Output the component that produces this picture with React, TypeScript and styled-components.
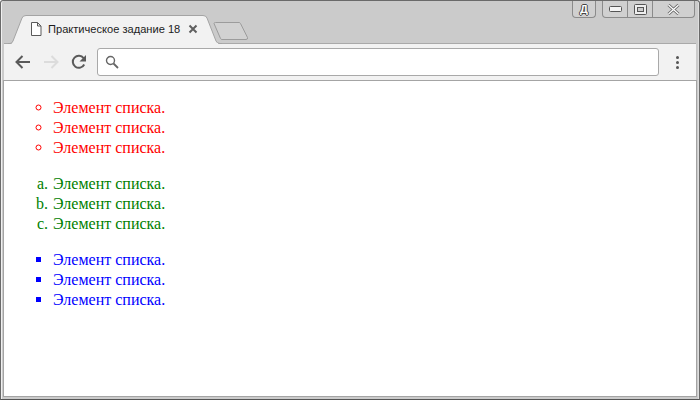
import React from "react";
import styled, { createGlobalStyle } from "styled-components";

const Global = createGlobalStyle`
  html, body { margin: 0; padding: 0; width: 700px; height: 400px; overflow: hidden; background: #fff; }
`;

const Frame = styled.div`
  box-sizing: border-box;
  width: 700px;
  height: 400px;
  display: flex;
  flex-direction: column;
  background: #cbcbcb;
  border: 1px solid #6a6a6a;
  border-bottom-color: #555;
  border-radius: 3px 3px 0 0;
  padding: 0 3px 3px 3px;
  box-shadow: inset 1px 0 0 #f0f0f0, inset -1px 0 0 #dedede;
`;

const TitleBar = styled.header`
  height: 42px;
  flex: none;
  display: flex;
  position: relative;
  align-items: flex-end;
  padding-left: 4px;
`;

const Tab = styled.div`
  position: relative;
  width: 214px;
  height: 29px;
  margin-bottom: -1px;
  display: flex;
  align-items: center;
  padding: 0 0 1px 22px;
  box-sizing: border-box;
  font: 11.1px "Liberation Sans", Arial, sans-serif;
  color: #1c1c1c;
`;

const TabShape = styled.svg`
  position: absolute;
  left: 0;
  top: 0;
`;

const TabIcon = styled.svg`
  position: relative;
  flex: none;
  margin-right: 6px;
`;

const TabTitle = styled.span`
  position: relative;
  white-space: nowrap;
  width: 140px;
`;

const TabClose = styled.svg`
  position: relative;
  flex: none;
`;

const NewTab = styled.svg`
  position: absolute;
  left: 209px;
  top: 21px;
`;

const Controls = styled.div`
  position: absolute;
  top: 0;
  right: 1px;
  display: flex;
  gap: 6px;
`;

const ControlGroup = styled.div`
  display: flex;
  height: 17px;
  box-sizing: border-box;
  border: 1px solid #8b8b8b;
  border-top: 0;
  border-radius: 0 0 4px 4px;
  background: #d0d0d0;
  overflow: hidden;
`;

const ControlButton = styled.div<{ $w: number; $divided?: boolean }>`
  width: ${(p) => p.$w}px;
  display: flex;
  align-items: center;
  justify-content: center;
  box-sizing: border-box;
  border-left: ${(p) => (p.$divided ? "1px solid #8b8b8b" : "0")};
`;

const LangLetter = styled.span`
  font: bold 11px "Liberation Sans", Arial, sans-serif;
  color: #fff;
  text-shadow: 1px 0 0 #444, -1px 0 0 #444, 0 1px 0 #444, 0 -1px 0 #444;
`;

const Toolbar = styled.nav`
  height: 38px;
  flex: none;
  box-sizing: border-box;
  background: #f2f2f2;
  border-top: 1px solid #a9a9a9;
  border-bottom: 1px solid #a9a9a9;
  display: flex;
  align-items: center;
  padding: 0 0 0 10px;
`;

const NavIcon = styled.svg<{ $gap: number }>`
  flex: none;
  margin-right: ${(p) => p.$gap}px;
`;

const Address = styled.div`
  flex: none;
  width: 562px;
  height: 28px;
  box-sizing: border-box;
  background: #fff;
  border: 1px solid #a9a9a9;
  border-radius: 3px;
  display: flex;
  align-items: center;
  padding-left: 7px;
`;

const Menu = styled.div`
  flex: 1;
  display: flex;
  flex-direction: column;
  align-items: center;
  gap: 2px;
`;

const Dot = styled.i`
  width: 3px;
  height: 3px;
  border-radius: 50%;
  background: #555;
`;

const Content = styled.main`
  flex: 1;
  background: #fff;
  padding: 16px 8px 0;
  box-sizing: border-box;
  font: 16px/20px "Liberation Serif", "Times New Roman", serif;
  box-shadow: 0 0 0 1px #a4a4a4;
`;

/* Text markers share the text's baseline; drawn markers sit 1px above it. */
const List = styled.ul<{ $color: string; $marker: string; $textMarker?: boolean }>`
  margin: 0 0 ${(p) => (p.$textMarker ? 15 : 16)}px;
  padding: ${(p) => (p.$textMarker ? 1 : 0)}px 0 0 40px;
  color: ${(p) => p.$color};
  list-style-type: ${(p) => p.$marker};
`;

const Item = styled.li`
  height: 20px;
`;

const ItemText = styled.span<{ $drop: number }>`
  margin-left: 1px;
  vertical-align: ${(p) => -p.$drop}px;
`;

const groups = [
  { color: "#ff0000", marker: "circle", textMarker: false },
  { color: "#008000", marker: "lower-alpha", textMarker: true },
  { color: "#0000ff", marker: "square", textMarker: false },
];

export default function App() {
  return (
    <>
      <Global />
      <Frame>
        <TitleBar>
          <Tab>
            <TabShape width="214" height="29" viewBox="0 0 214 29">
              <path d="M0 28.5 H2 Q4 28.5 5 26 L14 3 Q15 .5 18 .5 H195 Q198 .5 199 3 L208 26 Q209 28.5 212 28.5 H214" fill="#f2f2f2" stroke="#a4a4a4" />
              <rect x="4" y="28" width="206" height="1" fill="#f2f2f2" />
            </TabShape>
            <TabIcon width="12" height="14" viewBox="0 0 12 14">
              <path d="M1.5 .5 H7.5 L11 4 V13.5 H1.5 Z M7.5 .5 V4 H11" fill="#fff" stroke="#5a5a5a" />
            </TabIcon>
            <TabTitle>Практическое задание 18</TabTitle>
            <TabClose width="10" height="10" viewBox="0 0 10 10">
              <path d="M1.5 1.5 L8.5 8.5 M8.5 1.5 L1.5 8.5" stroke="#5f5f5f" strokeWidth="2" />
            </TabClose>
          </Tab>
          <NewTab width="36" height="19" viewBox="0 0 36 19">
            <path d="M1 1.5 Q1 .5 2.5 .5 H26 Q27 .5 27.5 1.5 L34.5 15.5 Q35 17.5 33 17.5 H9 Q8 17.5 7.5 16.5 Z" fill="#d2d2d2" stroke="#9c9c9c" />
          </NewTab>
          <Controls>
            <ControlGroup>
              <ControlButton $w={22}><LangLetter>Д</LangLetter></ControlButton>
            </ControlGroup>
            <ControlGroup>
              <ControlButton $w={24}>
                <svg width="13" height="6" viewBox="0 0 13 6"><rect x=".5" y=".5" width="12" height="5" rx="1" fill="#f4f4f4" stroke="#555" /></svg>
              </ControlButton>
              <ControlButton $w={25} $divided>
                <svg width="13" height="11" viewBox="0 0 13 11"><rect x=".5" y=".5" width="12" height="10" rx="1" fill="#eee" stroke="#555" /><rect x="3.5" y="3.5" width="6" height="4" fill="#ccc" stroke="#555" /></svg>
              </ControlButton>
              <ControlButton $w={42} $divided>
                <svg width="13" height="11" viewBox="0 0 13 11"><path d="M1.5 1 L11.5 10 M11.5 1 L1.5 10" stroke="#666" strokeWidth="3" /><path d="M1.5 1 L11.5 10 M11.5 1 L1.5 10" stroke="#fff" strokeWidth="1.2" /></svg>
              </ControlButton>
            </ControlGroup>
          </Controls>
        </TitleBar>
        <Toolbar>
          <NavIcon $gap={10} width="18" height="16" viewBox="0 0 18 16">
            <path d="M16 8 H3 M8.5 2 L2.5 8 L8.5 14" fill="none" stroke="#5a5a5a" strokeWidth="2" />
          </NavIcon>
          <NavIcon $gap={11} width="18" height="16" viewBox="0 0 18 16">
            <path d="M2 8 H15 M9.5 2 L15.5 8 L9.5 14" fill="none" stroke="#dcdcdc" strokeWidth="2" />
          </NavIcon>
          <NavIcon $gap={10} width="16" height="16" viewBox="0 0 16 16">
            <path d="M13.2 10.5 A6 6 0 1 1 12.6 4.2" fill="none" stroke="#5a5a5a" strokeWidth="2" />
            <path d="M15 1 V7.5 H8.5 Z" fill="#5a5a5a" />
          </NavIcon>
          <Address>
            <svg width="14" height="14" viewBox="0 0 14 14">
              <circle cx="5.5" cy="5.5" r="4" fill="none" stroke="#666" strokeWidth="1.4" />
              <path d="M8.5 8.5 L13 13" stroke="#666" strokeWidth="1.8" />
            </svg>
          </Address>
          <Menu>
            <Dot /><Dot /><Dot />
          </Menu>
        </Toolbar>
        <Content>
          {groups.map((g) => (
            <List key={g.marker} $color={g.color} $marker={g.marker} $textMarker={g.textMarker}>
              {[0, 1, 2].map((i) => (
                <Item key={i}>
                  <ItemText $drop={g.textMarker ? 0 : 1}>Элемент списка.</ItemText>
                </Item>
              ))}
            </List>
          ))}
        </Content>
      </Frame>
    </>
  );
}
